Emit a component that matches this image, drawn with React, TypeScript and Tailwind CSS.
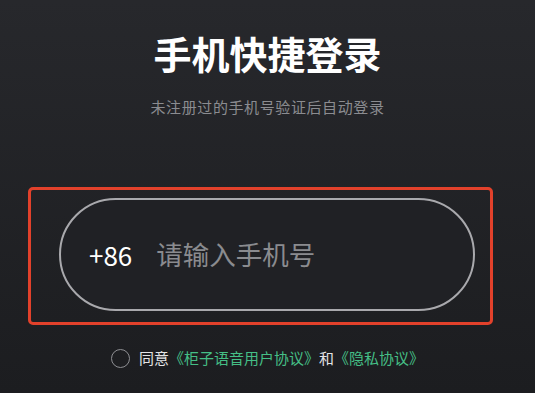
import React from "react";

export default function App() {
  return (
    <div
      className="w-[535px] h-[393px] overflow-hidden bg-gradient-to-b from-[#27282c] to-[#1c1d20] flex flex-col items-center"
      style={{ fontFamily: '"Noto Sans CJK SC", "Noto Sans", sans-serif' }}
    >
      <h1 className="mt-[34px] text-[38px] leading-[38px] font-bold text-white">
        手机快捷登录
      </h1>
      <p className="mt-[27px] text-[15px] leading-[15px] tracking-[0.6px] text-[#8b8c90]">
        未注册过的手机号验证后自动登录
      </p>

      <div className="self-start ml-[28px] mt-[73px] w-[465px] h-[138px] border-[3px] border-[#e2412b] rounded-[5px] pl-[28px] pr-[15px] pt-[8px] pb-[11px]">
        <div className="w-full h-full rounded-full border-2 border-[#a9a9ad] bg-[#202125] flex items-center pl-[28px]">
          <span className="text-[26px] leading-none text-white">+86</span>
          <span className="ml-[24px] text-[26.5px] leading-none text-[#8a8b8f]">
            请输入手机号
          </span>
        </div>
      </div>

      <div className="self-start ml-[111px] mt-[23px] flex items-center">
        <span className="w-[19px] h-[19px] rounded-full border-[1.5px] border-[#8e8f93]" />
        <span className="ml-[9px] text-[15px] leading-[20px] text-[#e4e4e6]">
          同意
          <span className="text-[#45bf86]">《柜子语音用户协议》</span>
          和
          <span className="text-[#45bf86]">《隐私协议》</span>
        </span>
      </div>
    </div>
  );
}
